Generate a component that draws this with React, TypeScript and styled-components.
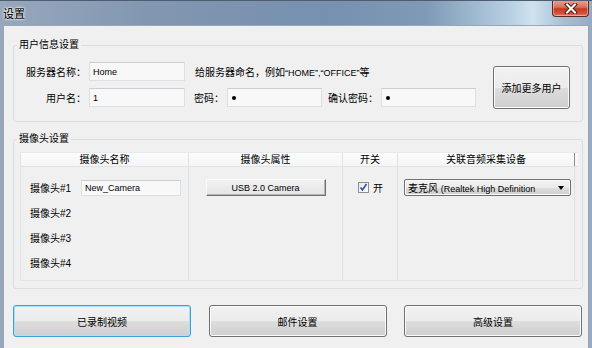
import React from "react";
import styled, { createGlobalStyle, css } from "styled-components";

const FONT = `"Liberation Sans", "Noto Sans CJK SC", sans-serif`;

const Global = createGlobalStyle`
  html, body { margin: 0; padding: 0; background: #ffffff; }
  body { font-family: ${FONT}; font-size: 10px; color: #000; }
  * { box-sizing: border-box; }
`;

const Window = styled.div`
  width: 592px;
  height: 348px;
  display: flex;
  flex-direction: column;
  overflow: hidden;
  border-top: 1px solid #4f5d6e;
  background: linear-gradient(
    90deg,
    #97a8bd 0%,
    #8197b1 25%,
    #7690af 55%,
    #7f9ab6 72%,
    #b6cfe2 86%,
    #cfe2ee 90%,
    #a9c0d4 95%,
    #95abc2 100%
  );
`;

const TitleBar = styled.div`
  height: 24px;
  display: flex;
  justify-content: space-between;
  align-items: flex-start;
  padding: 0 3px 0 3px;
`;

const Title = styled.span`
  font-family: "Noto Sans CJK SC", sans-serif;
  font-size: 11px;
  font-weight: 500;
  line-height: 12px;
  margin-top: 6px;
  color: #111;
  text-shadow: 0 0 3px #fff, 0 0 2px #fff, 0 0 1px #fff;
`;

const CloseButton = styled.div`
  width: 37px;
  height: 17px;
  margin-top: -1px;
  display: flex;
  align-items: center;
  justify-content: center;
  border: 1px solid #5a2a22;
  border-top: none;
  border-radius: 0 0 4px 4px;
  background: linear-gradient(180deg, #e8a696 0%, #d9705c 45%, #c7381f 55%, #d2543b 85%, #e0806a 100%);
  box-shadow: inset 0 0 0 1px rgba(255, 210, 200, 0.5);
`;

const Client = styled.div`
  flex: 1;
  margin: 0 3px;
  border: 1px solid #9aa6b4;
  border-bottom: none;
  background: #f0f0f0;
  padding: 13px 5px 0 9px;
  display: flex;
  flex-direction: column;
`;

const Group = styled.fieldset<{ $gap?: number }>`
  margin: ${(p) => p.$gap ?? 0}px 0 0 0;
  border: 1px solid #d5dfe5;
  border-radius: 3px;
  min-width: 0;
  padding: 0;
`;

const Legend = styled.legend`
  font-size: 10px;
  line-height: 12px;
  padding: 0 2px;
  margin-left: 3px;
  color: #000;
`;

const Latin = styled.span`
  font-family: "Liberation Sans", sans-serif;
  font-size: 9px;
`;

const UserBody = styled.div`
  display: flex;
  align-items: flex-start;
  padding: 11px 0 12px 0;
`;

const Fields = styled.div`
  display: flex;
  flex-direction: column;
  gap: 7px;
`;

const FieldRow = styled.div`
  display: flex;
  align-items: center;
`;

const Label = styled.span<{ $w: number }>`
  width: ${(p) => p.$w}px;
  text-align: right;
  white-space: nowrap;
  margin-right: 3px;
  font-size: 10px;
`;

const Hint = styled.span`
  margin-left: 10px;
  white-space: nowrap;
  font-size: 10px;
`;

const TextBox = styled.div<{ $w: number; $ml?: number }>`
  width: ${(p) => p.$w}px;
  height: 19px;
  margin-left: ${(p) => p.$ml ?? 0}px;
  border: 1px solid #dcdfe4;
  border-top-color: #c9ced5;
  background: #f8f8f9;
  padding: 0 3px;
  display: flex;
  align-items: center;
  font-size: 9px;
  font-family: "Liberation Sans", sans-serif;
  white-space: nowrap;
`;

const Dot = styled.span`
  width: 4px;
  height: 4px;
  border-radius: 50%;
  background: #000;
  margin-left: 1px;
`;

const winButton = css`
  border: 1px solid #707070;
  border-radius: 3px;
  background: linear-gradient(180deg, #f2f2f2 0%, #ebebeb 50%, #dddddd 51%, #cfcfcf 100%);
  box-shadow: inset 0 0 0 1px #fbfbfb;
  display: flex;
  align-items: center;
  justify-content: center;
  font-family: "Noto Sans CJK SC", sans-serif;
  font-size: 10px;
  color: #000;
`;

const AddButton = styled.div`
  ${winButton};
  width: 77px;
  height: 43px;
  margin: 4px 0 0 17px;
`;

const CamBody = styled.div`
  padding: 7px 4px 7px 6px;
`;

const ListView = styled.div`
  border-left: 1px solid #dfe5ea;
  border-bottom: 1px solid #dfe5ea;
`;

const COLS = "168px 154px 55px 177px 1fr";

const Header = styled.div`
  display: grid;
  grid-template-columns: ${COLS};
  height: 15px;
  background: linear-gradient(180deg, #fcfcfc 0%, #f4f5f6 100%);
  border-top: 1px solid #e6eaee;
  border-bottom: 1px solid #dde3e8;
`;

const HeadCell = styled.div<{ $strong?: boolean }>`
  display: flex;
  align-items: center;
  justify-content: center;
  font-size: 10px;
  line-height: 13px;
  border-right: 1px solid ${(p) => (p.$strong ? "#8c8c8c" : "#dfe3e7")};
`;

const Body = styled.div`
  display: grid;
  grid-template-columns: ${COLS};
  height: 113px;
`;

const Column = styled.div<{ $last?: boolean }>`
  display: flex;
  flex-direction: column;
  padding-top: 8px;
  border-right: ${(p) => (p.$last ? "none" : "1px solid #d9e0e6")};
`;

const Cell = styled.div<{ $pl?: number; $center?: boolean }>`
  height: 25px;
  display: flex;
  align-items: center;
  justify-content: ${(p) => (p.$center ? "center" : "flex-start")};
  padding-left: ${(p) => p.$pl ?? 0}px;
  font-size: 10px;
`;

const CamLabel = styled.span`
  width: 51px;
  white-space: nowrap;
`;

const NameBox = styled(TextBox)`
  height: 16px;
`;

const ClassicButton = styled.div`
  width: 120px;
  height: 17px;
  display: flex;
  align-items: center;
  justify-content: center;
  font-size: 9px;
  border: 1px solid;
  border-color: #fafafa #6f6f6f #6f6f6f #fafafa;
  background: linear-gradient(180deg, #f2f2f2 0%, #e4e4e4 100%);
  box-shadow: inset -1px -1px 0 #b5b5b5;
`;

const Check = styled.div`
  width: 11px;
  height: 11px;
  border: 1px solid #8e8f8f;
  background: linear-gradient(135deg, #e6e6e6 0%, #ffffff 100%);
  display: flex;
  align-items: center;
  justify-content: center;
  margin-right: 4px;
`;

const Combo = styled.div`
  ${winButton};
  width: 167px;
  height: 17px;
  border-radius: 2px;
  justify-content: space-between;
  padding: 0 6px 0 3px;
  font-family: ${FONT};
  white-space: nowrap;
`;

const Arrow = styled.span`
  width: 0;
  height: 0;
  border-left: 3px solid transparent;
  border-right: 3px solid transparent;
  border-top: 4px solid #000;
`;

const ButtonRow = styled.div`
  display: flex;
  justify-content: space-between;
  margin-top: 16px;
  padding-right: 1px;
`;

const BigButton = styled.div<{ $focused?: boolean }>`
  ${winButton};
  width: 178px;
  height: 32px;
  ${(p) =>
    p.$focused &&
    css`
      border-color: #3c9fd6;
      box-shadow: inset 0 0 0 1px #a8e1f8;
    `}
`;

const cams = ["摄像头#1", "摄像头#2", "摄像头#3", "摄像头#4"];

export default function App() {
  return (
    <>
      <Global />
      <Window>
        <TitleBar>
          <Title>设置</Title>
          <CloseButton>
            <svg width="14" height="11" viewBox="0 0 14 11">
              <path d="M3 1.5 L11 9.5 M11 1.5 L3 9.5" stroke="#4a1e17" strokeWidth="4" strokeLinecap="square" />
              <path d="M3 1.5 L11 9.5 M11 1.5 L3 9.5" stroke="#ffffff" strokeWidth="2" strokeLinecap="square" />
            </svg>
          </CloseButton>
        </TitleBar>
        <Client>
          <Group>
            <Legend>用户信息设置</Legend>
            <UserBody>
              <Fields>
                <FieldRow>
                  <Label $w={72}>服务器名称：</Label>
                  <TextBox $w={96}>Home</TextBox>
                  <Hint>
                    给服务器命名，例如<Latin>“HOME”,“OFFICE”</Latin>等
                  </Hint>
                </FieldRow>
                <FieldRow>
                  <Label $w={72}>用户名：</Label>
                  <TextBox $w={96}>1</TextBox>
                  <Label $w={39}>密码：</Label>
                  <TextBox $w={95}>
                    <Dot />
                  </TextBox>
                  <Label $w={56}>确认密码：</Label>
                  <TextBox $w={95}>
                    <Dot />
                  </TextBox>
                </FieldRow>
              </Fields>
              <AddButton>添加更多用户</AddButton>
            </UserBody>
          </Group>
          <Group $gap={11}>
            <Legend>摄像头设置</Legend>
            <CamBody>
              <ListView>
                <Header>
                  <HeadCell>摄像头名称</HeadCell>
                  <HeadCell>摄像头属性</HeadCell>
                  <HeadCell>开关</HeadCell>
                  <HeadCell $strong>关联音频采集设备</HeadCell>
                  <div />
                </Header>
                <Body>
                  <Column>
                    {cams.map((c, i) => (
                      <Cell key={c} $pl={9}>
                        <CamLabel>{c}</CamLabel>
                        {i === 0 && <NameBox $w={100}>New_Camera</NameBox>}
                      </Cell>
                    ))}
                  </Column>
                  <Column>
                    <Cell $center>
                      <ClassicButton>USB 2.0 Camera</ClassicButton>
                    </Cell>
                  </Column>
                  <Column>
                    <Cell $pl={15}>
                      <Check>
                        <svg width="9" height="9" viewBox="0 0 9 9">
                          <path d="M1.5 4.5 L3.5 7 L7.5 1" fill="none" stroke="#2a4fb4" strokeWidth="1.6" />
                        </svg>
                      </Check>
                      开
                    </Cell>
                  </Column>
                  <Column>
                    <Cell $pl={6}>
                      <Combo>
                        <span>
                          麦克风 <Latin>(Realtek High Definition</Latin>
                        </span>
                        <Arrow />
                      </Combo>
                    </Cell>
                  </Column>
                  <Column $last />
                </Body>
              </ListView>
            </CamBody>
          </Group>
          <ButtonRow>
            <BigButton $focused>已录制视频</BigButton>
            <BigButton>邮件设置</BigButton>
            <BigButton>高级设置</BigButton>
          </ButtonRow>
        </Client>
      </Window>
    </>
  );
}
